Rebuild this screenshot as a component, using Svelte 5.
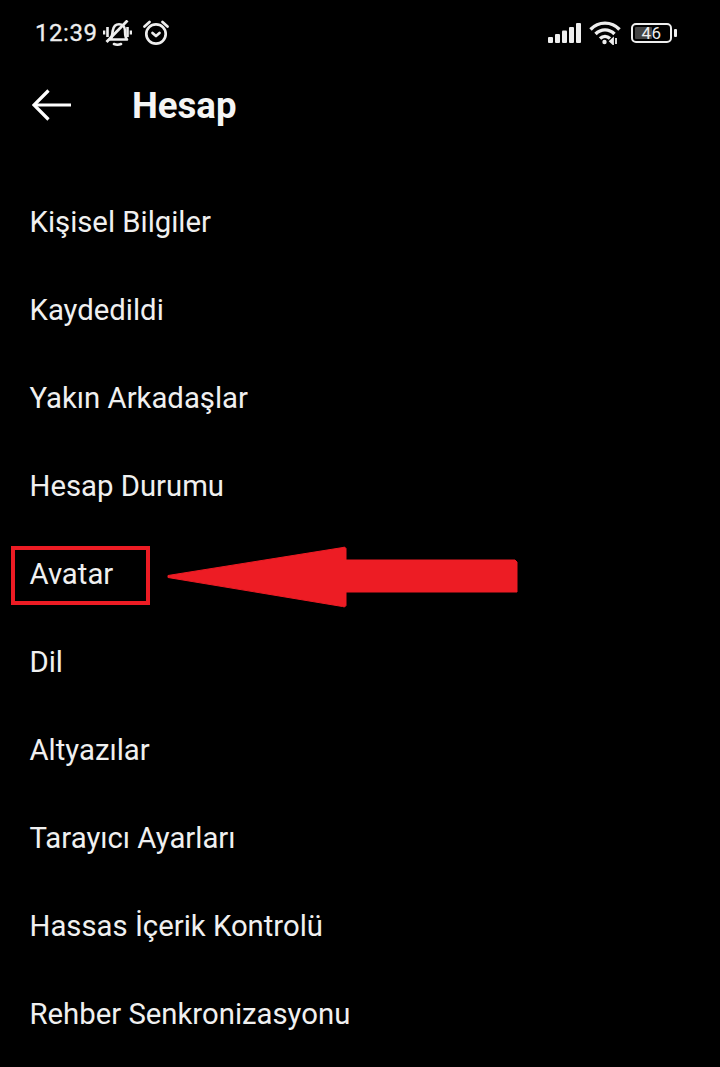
<script>
  const items = [
    'Kişisel Bilgiler',
    'Kaydedildi',
    'Yakın Arkadaşlar',
    'Hesap Durumu',
    'Avatar',
    'Dil',
    'Altyazılar',
    'Tarayıcı Ayarları',
    'Hassas İçerik Kontrolü',
    'Rehber Senkronizasyonu'
  ];
</script>

<div class="screen">
  <div class="status">
    <div class="status__left">
      <span class="status__time">12:39</span>
      <svg class="bell" width="29" height="26" viewBox="0 0 29 26" fill="none" stroke="#eee" stroke-width="2.600">
        <path d="M7 19.500c2.500-2 2-5 2.800-9C10.600 6 13 4.200 16 4.200c3.500 0 5.800 2.500 6 6 .2 3.500-.2 6.800 2 9.300H7z" stroke-linejoin="round" />
        <path d="M11 24c2 .8 5 .8 7 0" stroke-linecap="round" />
        <path d="M3.500 22 24.500 .5" stroke-width="2.800" />
        <path d="M1 10.500v4M4.500 7v10M24.500 7v10M28 10.500v4" />
      </svg>
      <svg class="alarm" width="26" height="26" viewBox="0 0 26 26" fill="none" stroke="#eee" stroke-width="2.700">
        <circle cx="13" cy="14" r="9.700" />
        <path d="M1.500 6.500 6.500 2M24.500 6.500l-5-4.500" stroke-linecap="round" />
        <path d="M9.500 13 13 16l3.500-3" stroke-linecap="round" stroke-linejoin="round" />
      </svg>
    </div>
    <div class="status__right">
      <svg width="33" height="20" viewBox="0 0 33 20" fill="#eee">
        <rect x="0" y="14" width="5" height="6" rx="1" />
        <rect x="7" y="11" width="5" height="9" rx="1" />
        <rect x="14" y="7.500" width="5" height="12.500" rx="1" />
        <rect x="21" y="4" width="5" height="16" rx="1" />
        <rect x="28" y="0" width="5" height="20" rx="1" />
      </svg>
      <svg width="32" height="24" viewBox="0 0 32 24" fill="none" stroke="#eee" stroke-width="3.400">
        <path d="M1.500 8.500c8-8.500 21-8.500 29 0" />
        <path d="M6.500 13c5.500-5.500 13.500-5.500 19 0" />
        <path d="M11 17.500c3-2.800 7-2.800 10 0" />
        <circle cx="15.500" cy="21" r="2.200" fill="#eee" stroke="none" />
        <path d="M24 23v-5.500l-3 2.800 3 2.700zM27 17v6" stroke-width="1.800" fill="#eee" />
      </svg>
      <div class="battery">
        <div class="battery__body">
          <div class="battery__fill"></div>
          <span class="battery__level">46</span>
        </div>
        <div class="battery__nub"></div>
      </div>
    </div>
  </div>

  <header class="header">
    <svg class="back" width="40" height="32" viewBox="0 0 40 32" fill="none" stroke="#fff" stroke-width="3.200">
      <path d="M39 16H2" />
      <path d="M16.500 1.500 2 16l14.500 14.500" />
    </svg>
    <h1 class="title">Hesap</h1>
  </header>

  <ul class="list">
    {#each items as item}
      <li class="list__item">{item}</li>
    {/each}
  </ul>

  <div class="marker"></div>
  <svg class="arrow" width="352" height="62" viewBox="0 0 352 62" fill="#ed1c24">
    <path d="M1 29.500 176 1.500l1.500-.5 1.500 1.500V14H348l2 2V46H179v13.500l-1.500 1.500-2-.5L1 31.500z" stroke="#ed1c24" stroke-linejoin="round" stroke-width="1" />
  </svg>
</div>

<style>
  :global(body) {
    margin: 0;
    background: #000;
  }

  .screen {
    position: relative;
    width: 720px;
    height: 1067px;
    overflow: hidden;
    background: #000;
    color: #f5f5f5;
    font-family: Roboto, "Liberation Sans", sans-serif;
  }

  .status {
    display: flex;
    align-items: center;
    justify-content: space-between;
    height: 66px;
    padding: 0 43px 0 35px;
    box-sizing: border-box;
  }

  .status__left,
  .status__right {
    display: flex;
    align-items: center;
  }

  .status__time {
    font-size: 24px;
    letter-spacing: 0.55px;
    color: #eee;
    -webkit-text-stroke: 0.3px #eee;
  }

  .bell {
    margin-left: 5px;
  }

  .alarm {
    margin-left: 11px;
  }

  .status__right {
    gap: 8px;
  }

  .battery {
    display: flex;
    align-items: center;
    gap: 2px;
    margin-left: 2px;
  }

  .battery__body {
    position: relative;
    display: flex;
    align-items: center;
    justify-content: center;
    width: 41px;
    height: 20px;
    box-sizing: border-box;
    border: 2px solid #eee;
    border-radius: 5px;
  }

  .battery__fill {
    position: absolute;
    left: 2px;
    top: 2px;
    bottom: 2px;
    width: 46%;
    background: #444;
    border-radius: 1px;
  }

  .battery__level {
    position: relative;
    font-size: 17px;
    letter-spacing: 0.5px;
    color: #eee;
  }

  .battery__nub {
    width: 3px;
    height: 8px;
    background: #eee;
    border-radius: 1px;
  }

  .header {
    display: flex;
    align-items: center;
    height: 78px;
    padding-left: 32px;
  }

  .title {
    margin: 0 0 0 60px;
    font-size: 36.600px;
    font-weight: 700;
    color: #f5f5f5;
  }

  .list {
    margin: 0;
    padding: 34px 0 0 29.500px;
    list-style: none;
  }

  .list__item {
    display: flex;
    align-items: center;
    height: 88px;
    font-size: 29.300px;
    color: #f0f0f0;
  }

  .marker {
    position: absolute;
    left: 11px;
    top: 546px;
    width: 139px;
    height: 59px;
    box-sizing: border-box;
    border: 4px solid #ed1c24;
  }

  .arrow {
    position: absolute;
    left: 167px;
    top: 546px;
  }
</style>
